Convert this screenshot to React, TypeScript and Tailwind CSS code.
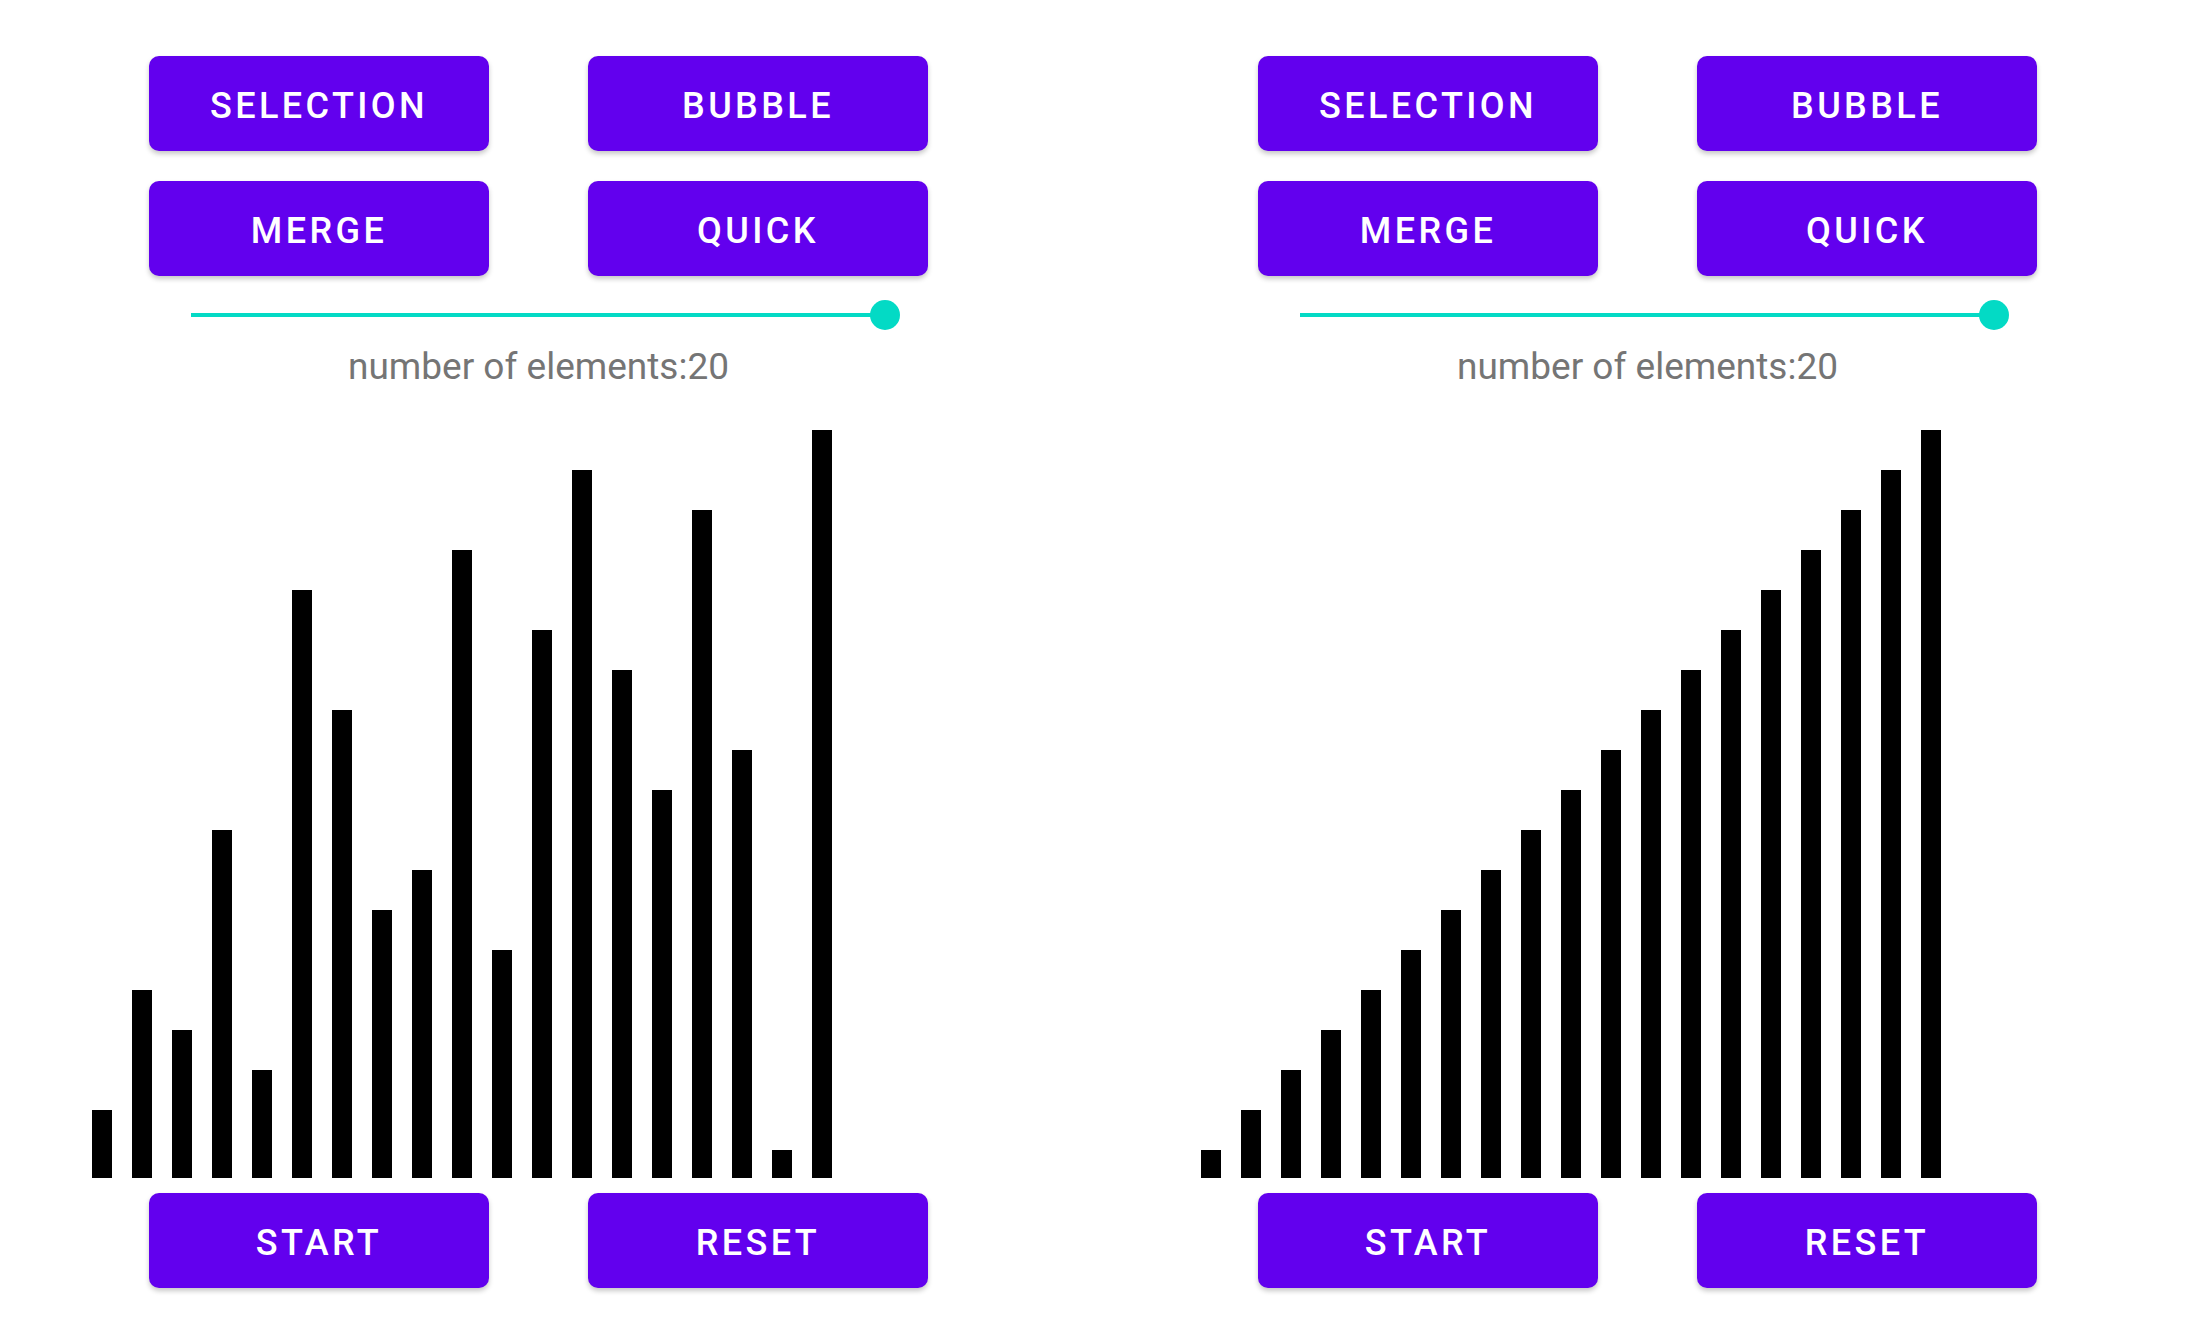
import React from 'react';

const unsorted = [2, 5, 4, 9, 3, 15, 12, 7, 8, 16, 6, 14, 18, 13, 10, 17, 11, 1, 19];
const sorted = [1, 2, 3, 4, 5, 6, 7, 8, 9, 10, 11, 12, 13, 14, 15, 16, 17, 18, 19];

function Button(props: { label: string }) {
  return (
    <button
      type="button"
      className="w-[340px] h-[95px] pt-[4px] rounded-[10px] bg-[#6200ee] text-white text-[36px] font-medium tracking-[3.4px] uppercase shadow-[0_3px_5px_rgba(0,0,0,0.22)] flex items-center justify-center"
    >
      {props.label}
    </button>
  );
}

function Panel(props: { values: number[] }) {
  return (
    <div className="w-[836px] flex flex-col">
      <div className="ml-[57px] w-[779px] flex flex-col">
        <div className="grid grid-cols-[340px_340px] gap-x-[99px] gap-y-[30px]">
          <Button label="Selection" />
          <Button label="Bubble" />
          <Button label="Merge" />
          <Button label="Quick" />
        </div>

        <div className="mt-[24px] ml-[27px] w-[724px] h-[30px] relative">
          <div className="absolute left-[15px] right-[15px] top-[13px] h-[4px] bg-[#03dac5]" />
          <div className="absolute right-0 top-0 w-[30px] h-[30px] rounded-full bg-[#03dac5]" />
        </div>

        <p className="mt-[18px] text-center text-[37px] leading-none text-[#757575]">
          number of elements:20
        </p>
      </div>

      <div className="mt-[33px] h-[760px] flex items-end gap-[20px]">
        {props.values.map(function(v, i) {
          return <div key={i} className="w-[20px] bg-black" style={{ height: v * 40 - 12 }} />;
        })}
      </div>

      <div className="mt-[15px] ml-[57px] grid grid-cols-[340px_340px] gap-x-[99px]">
        <Button label="Start" />
        <Button label="Reset" />
      </div>
    </div>
  );
}

export default function App() {
  return (
    <div className="w-[2188px] h-[1344px] bg-white flex pl-[92px] pt-[56px] gap-[273px] font-['Roboto',sans-serif]">
      <Panel values={unsorted} />
      <Panel values={sorted} />
    </div>
  );
}
